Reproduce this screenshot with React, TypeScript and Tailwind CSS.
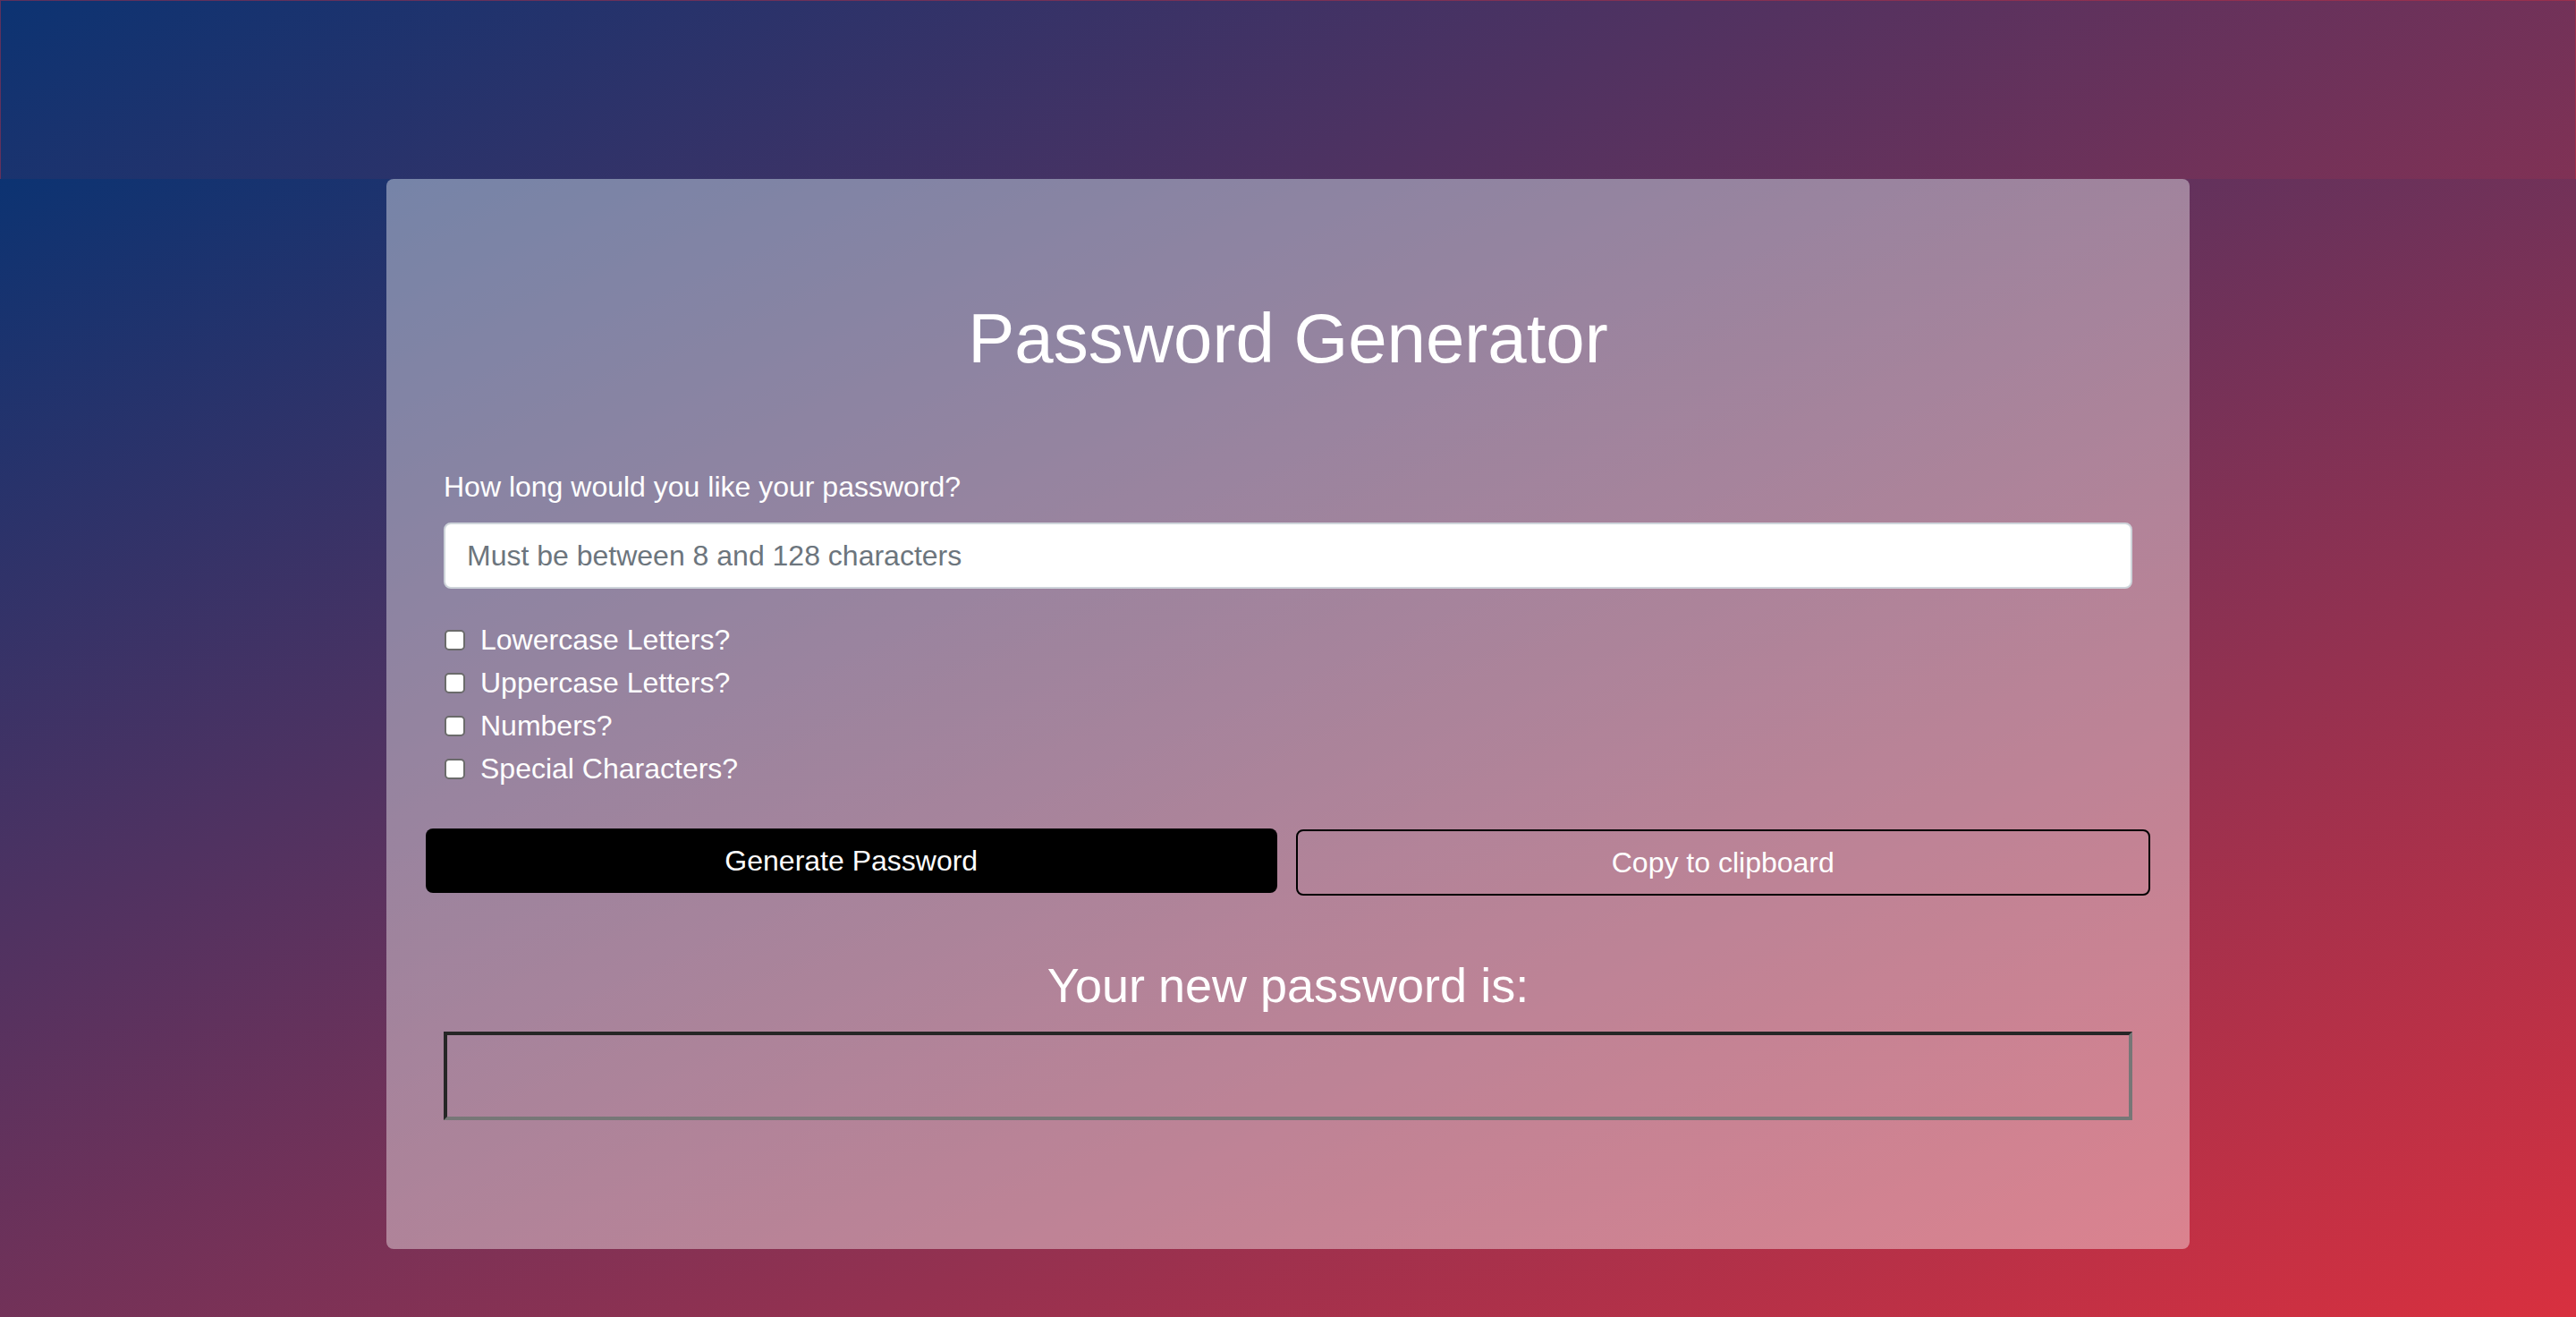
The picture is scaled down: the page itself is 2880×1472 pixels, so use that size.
import { useState } from 'react'

const options = [
    { id: 'lower', label: 'Lowercase Letters?' },
    { id: 'upper', label: 'Uppercase Letters?' },
    { id: 'numbers', label: 'Numbers?' },
    { id: 'special', label: 'Special Characters?' },
]

export default function App() {
    const [length, setLength] = useState('')
    const [checked, setChecked] = useState<Record<string, boolean>>({})
    const [password, setPassword] = useState('')

    const generate = () => {
        const n = Number(length)
        if (!n || n < 8 || n > 128) return
        let pool = ''
        if (checked.lower) pool += 'abcdefghijklmnopqrstuvwxyz'
        if (checked.upper) pool += 'ABCDEFGHIJKLMNOPQRSTUVWXYZ'
        if (checked.numbers) pool += '0123456789'
        if (checked.special) pool += '!@#$%^&*()-_=+[]{};:,.<>?'
        if (!pool) return
        let out = ''
        for (let i = 0; i < n; i++) out += pool[Math.floor(Math.random() * pool.length)]
        setPassword(out)
    }

    return (
        <div className="min-h-screen bg-[linear-gradient(to_bottom_right,#0c3372,#d8303f)] font-['Liberation_Sans',Arial,sans-serif] text-white">
            {/* Header band */}
            <header className="h-[200px] border-x border-t border-[#d8303f]/40" />

            <main className="h-[1272px] bg-[linear-gradient(to_bottom_right,#0c3372,#d8303f)]">
                <div className="mx-auto w-[2016px] rounded-[8px] bg-white/40 px-[64px] pt-[130px] pb-[144px]">
                    <h1 className="text-center text-[78px] leading-[96px] font-normal">Password Generator</h1>

                    <label htmlFor="length" className="mt-[94px] block text-[32px] leading-[48px]">
                        How long would you like your password?
                    </label>
                    <input
                        id="length"
                        type="text"
                        value={length}
                        onChange={e => setLength(e.target.value)}
                        placeholder="Must be between 8 and 128 characters"
                        className="mt-[16px] block h-[74px] w-full rounded-[8px] border-2 border-[#ced4da] bg-white px-[24px] text-[32px] text-[#495057] placeholder:text-[#6c757d] focus:outline-none"
                    />

                    {/* Options */}
                    <div className="mt-[32px]">
                        {options.map(o => (
                            <label key={o.id} className="flex h-[48px] items-center gap-[17px] pt-[2px] text-[32px]">
                                <input
                                    type="checkbox"
                                    checked={!!checked[o.id]}
                                    onChange={e => setChecked({ ...checked, [o.id]: e.target.checked })}
                                    className="ml-[1px] h-[23px] w-[23px] shrink-0 appearance-none rounded-[5px] border-2 border-[#6b6b6b] bg-white checked:bg-[#0d6efd]"
                                />
                                {o.label}
                            </label>
                        ))}
                    </div>

                    {/* Buttons */}
                    <div className="-mx-[20px] mt-[44px] flex items-start gap-[21px]">
                        <button
                            onClick={generate}
                            className="flex h-[72px] flex-1 items-center justify-center rounded-[8px] bg-black text-[32px] text-white"
                        >
                            Generate Password
                        </button>
                        <button
                            onClick={() => password && navigator.clipboard?.writeText(password)}
                            className="mt-[1px] flex h-[74px] flex-1 items-center justify-center rounded-[8px] border-2 border-black bg-transparent text-[32px] text-white"
                        >
                            Copy to clipboard
                        </button>
                    </div>

                    <h2 className="mt-[68px] text-center text-[54px] leading-[64px] font-normal">Your new password is:</h2>
                    <textarea
                        readOnly
                        value={password}
                        className="mt-[20px] block h-[99px] w-full resize-none border-4 border-t-[#262626] border-l-[#262626] border-r-[#777777] border-b-[#777777] bg-transparent px-[12px] py-[8px] text-[32px] text-white focus:outline-none"
                    />
                </div>
            </main>
        </div>
    )
}
